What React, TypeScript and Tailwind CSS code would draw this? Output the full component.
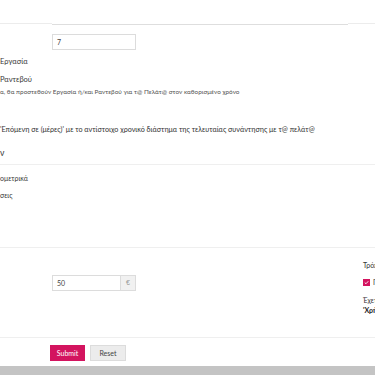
import React from "react";

export default function App() {
  return (
    <div
      className="w-[375px] h-[375px] overflow-hidden bg-white text-[#3a3a3a]"
      style={{ fontFamily: "Lato, 'Open Sans', sans-serif" }}
    >
      {/* top row: previous input bottom edge + rule */}
      <div className="flex h-[25px]">
        <div className="w-[52px] h-[24px] border-b border-[#ececec]" />
        <div className="w-[296px] h-[25px] border-b border-[#dedede]" />
        <div className="flex-1 h-[24px] border-b border-[#ececec]" />
      </div>

      <div className="mt-[9px] ml-[52px] w-[84px] h-[16px] border border-[#dcdcdc] flex items-center pl-[4px] text-[7px] text-[#444]">
        7
      </div>

      <div className="mt-[7px] h-[10px] leading-[10px] text-[7.5px] whitespace-nowrap">Εργασία</div>
      <div className="mt-[8px] h-[10px] leading-[10px] text-[7.5px] whitespace-nowrap">Ραντεβού</div>
      <div className="mt-[3px] h-[8px] leading-[8px] text-[6.4px] text-[#555] whitespace-nowrap">
        α, θα προστεθούν Εργασία ή/και Ραντεβού για τ@ Πελάτ@ στον καθορισμένο χρόνο
      </div>

      <div className="mt-[29px] h-[10px] leading-[10px] text-[7.2px] text-[#333] whitespace-nowrap">
        'Επόμενη σε (μέρες)' με το αντίστοιχο χρονικό διάστημα της τελευταίας συνάντησης με τ@ πελάτ@
      </div>

      <div className="mt-[13px] h-[10px] leading-[10px] text-[8.5px] text-[#333] whitespace-nowrap">ν</div>
      <div className="mt-[6px] h-px bg-[#efefef]" />

      <div className="mt-[8px] h-[10px] leading-[10px] text-[7px] whitespace-nowrap">ομετρικά</div>
      <div className="mt-[7px] h-[10px] leading-[10px] text-[7px] whitespace-nowrap">σεις</div>

      <div className="mt-[47px] h-px bg-[#efefef]" />

      <div className="flex h-[89px]">
        <div className="ml-[52px] mt-[27px] flex h-[16px]">
          <div className="w-[69px] h-[16px] border border-[#dcdcdc] flex items-center pl-[4px] text-[7px] text-[#444]">
            50
          </div>
          <div
            className="w-[15px] h-[16px] border border-l-0 border-[#dcdcdc] bg-[#f1f1f1] flex items-center justify-center text-[7px] text-[#999]"
            style={{ fontFamily: "'Liberation Sans', sans-serif" }}
          >
            €
          </div>
        </div>
        <div className="ml-[227px] pt-[12px] whitespace-nowrap text-[7px] text-[#333]">
          <div className="h-[10px] leading-[10px]">Τρόπος</div>
          <div className="mt-[8px] flex items-center gap-[3px] h-[8px]">
            <div className="w-[7px] h-[7px] bg-[#d3145f] flex items-center justify-center">
              <svg width="5" height="5" viewBox="0 0 10 10">
                <path d="M1.5 5.2 L4 7.5 L8.5 2.5" stroke="white" strokeWidth="1.8" fill="none" />
              </svg>
            </div>
            <span className="h-[10px] leading-[10px]">Π</span>
          </div>
          <div className="mt-[9px] h-[10px] leading-[10px]">Έχετε</div>
          <div className="h-[10px] leading-[10px] font-bold text-[#222]">'Χρήση</div>
        </div>
      </div>

      <div className="h-px bg-[#efefef]" />

      <div className="mt-[7px] flex gap-[5px] pl-[50px]">
        <div className="w-[35px] h-[16px] bg-[#d3145f] text-white text-[7px] flex items-center justify-center">
          Submit
        </div>
        <div className="w-[36px] h-[16px] bg-[#ececec] border border-[#dcdcdc] text-[#444] text-[7px] flex items-center justify-center">
          Reset
        </div>
      </div>

      <div className="mt-[5px] h-[20px] bg-[#c4c4c4]" />
    </div>
  );
}
